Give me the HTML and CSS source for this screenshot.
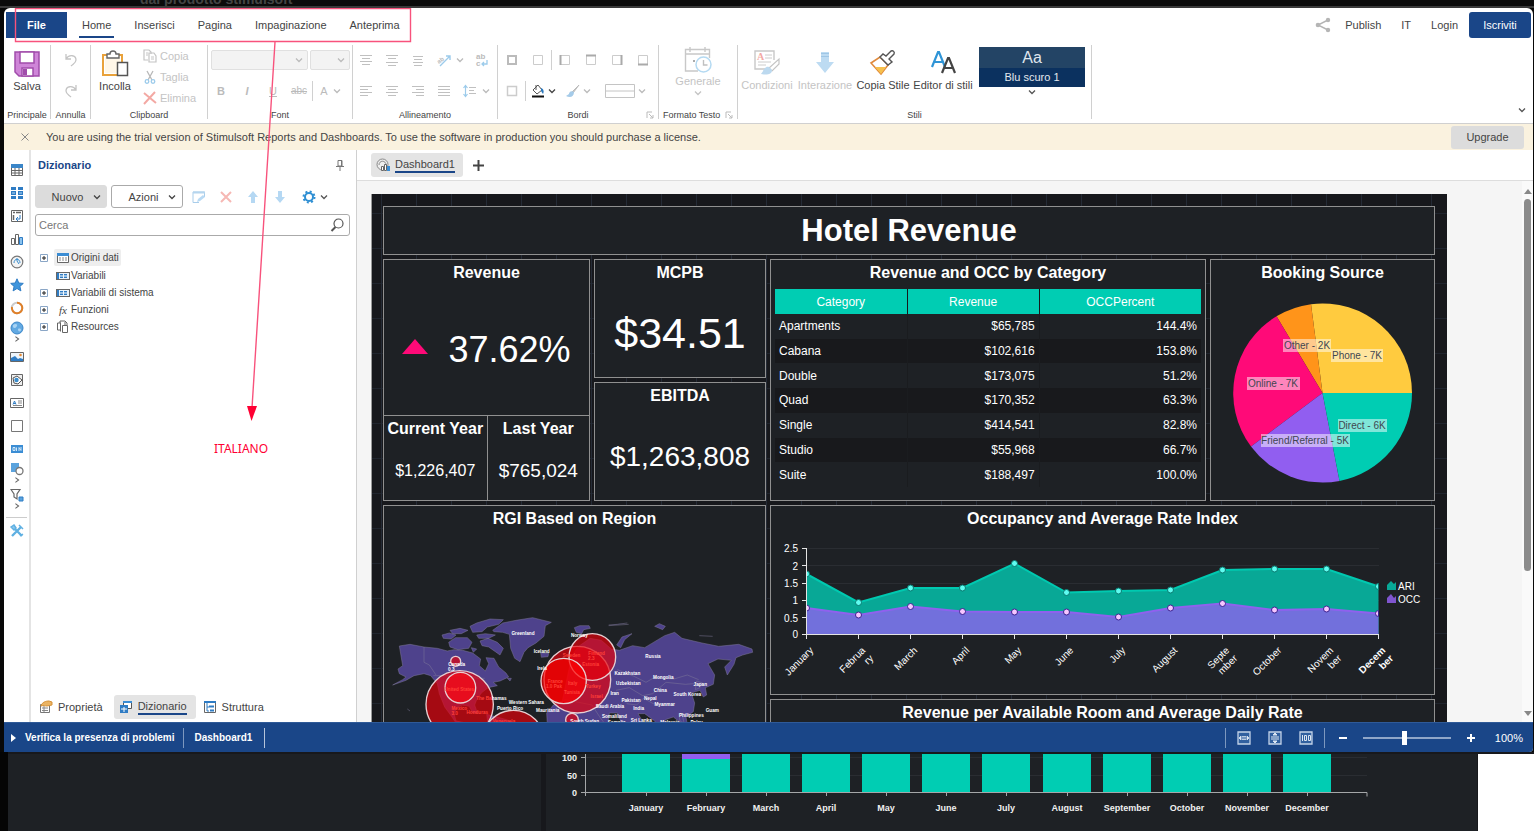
FILE: index.html
```html
<!DOCTYPE html>
<html lang="it">
<head>
<meta charset="utf-8">
<title>Dashboard1 - Designer</title>
<link rel="stylesheet" href="styles.css">
</head>
<body>
<svg class="defs" aria-hidden="true">
  <symbol id="chev" viewBox="0 0 10 10"><path d="M2 3.5 5 6.5 8 3.5" fill="none" stroke="currentColor" stroke-width="1.3"/></symbol>
  <symbol id="chevr" viewBox="0 0 10 10"><path d="M3 2 7 5 3 8" fill="none" stroke="currentColor" stroke-width="1.3"/></symbol>
  <symbol id="exp" viewBox="0 0 10 10"><path d="M1.5 1.5h7v7h-7z" fill="#fff" stroke="#8aa6c6"/><path d="M3 5h4M5 3v4" stroke="#222"/></symbol>
  <symbol id="launch" viewBox="0 0 8 8"><path d="M1 7V1h5M3 3l4 4M7 4v3H4" fill="none" stroke="#bbb"/></symbol>
  <symbol id="vars" viewBox="0 0 14 10"><rect x=".5" y="1.5" width="13" height="7" fill="#e8f2fb" stroke="#666"/><path d="M1 2h2v6H1z" fill="#2f7cc4"/><path d="M4 3h3v4H4zM8 3h3v4H8z" fill="#2f7cc4"/><path d="M4 5h7" stroke="#fff"/></symbol>
</svg>

<div class="behind-top"><span>dal prodotto stimulsoft</span></div>

<div class="window">
  <nav class="tabs">
    <button class="file">File</button>
    <a class="tab active" href="#">Home</a>
    <a class="tab" href="#">Inserisci</a>
    <a class="tab" href="#">Pagina</a>
    <a class="tab" href="#">Impaginazione</a>
    <a class="tab" href="#">Anteprima</a>
    <div class="account">
      <button class="plain" aria-label="Condividi"><svg width="16" height="16" viewBox="0 0 16 16"><path d="M13 3 3 8l10 5" fill="none" stroke="#b5b5b5" stroke-width="1.4"/><g fill="#b5b5b5"><circle cx="13" cy="3" r="2.2"/><circle cx="3" cy="8" r="2.3"/><circle cx="13" cy="13" r="2.2"/></g></svg></button>
      <a href="#">Publish</a><a class="lang" href="#">IT</a><a href="#">Login</a>
      <button class="signup">Iscriviti</button>
    </div>
  </nav>

  <div class="ribbon">
    <section class="group g-main">
      <div class="body center">
        <button class="big"><svg width="28" height="28" viewBox="0 0 28 28"><path d="M2 2h24v24H6l-4-4z" fill="#cf85d8" stroke="#a14cab" stroke-width="1.5"/><path d="M7 2h14v11H7z" fill="#fff" stroke="#a14cab" stroke-width="1.5"/><path d="M9 26v-8h11v8z" fill="#fff" stroke="#a14cab" stroke-width="1.5"/><path d="M10 19h4v6h-4z" fill="#a14cab"/></svg>Salva</button>
      </div><h3>Principale</h3>
    </section>
    <section class="group g-undo">
      <div class="body rows">
        <button class="tool" disabled aria-label="Annulla"><svg width="14" height="14" viewBox="0 0 14 14"><path d="M2 1v5h5M2 6C5 1 12 2 12 7c0 3-3 4-5 6" fill="none" stroke="#c4c4c4" stroke-width="1.3"/></svg></button>
        <button class="tool" disabled aria-label="Ripeti"><svg width="14" height="14" viewBox="0 0 14 14"><path d="M12 1v5H7M12 6C9 1 2 2 2 7c0 3 3 4 5 6" fill="none" stroke="#c4c4c4" stroke-width="1.3"/></svg></button>
      </div><h3>Annulla</h3>
    </section>
    <section class="group g-clip">
      <div class="body">
        <button class="big"><svg width="28" height="28" viewBox="0 0 28 28"><path d="M17 5h4v7M7 5H2v20h14" fill="none" stroke="#e9a23b" stroke-width="2"/><path d="M4 7h15v16H4z" fill="#fff7e8"/><path d="M6 8V4h3c0-4 6-4 6 0h3v4z" fill="#fff" stroke="#666" stroke-width="1.4"/><path d="M16.500 12.500h10v13h-10z" fill="#fff" stroke="#555" stroke-width="1.5"/></svg>Incolla</button>
        <div class="clip-list">
          <button disabled><svg width="14" height="14" viewBox="0 0 14 14"><path d="M5 11H1V1h5l2 2v2M6 4h5l2 3v6H6z" fill="none" stroke="#c4c4c4" stroke-width="1.2"/><path d="M3 4h2M3 6h2M8 8h3M8 10h3" stroke="#c4c4c4"/></svg>Copia</button>
          <button disabled><svg width="14" height="14" viewBox="0 0 14 14"><path d="M4 1l5 9M10 1 5 10" stroke="#b8b8b8" stroke-width="1.3"/><circle cx="4" cy="11.500" r="1.800" fill="none" stroke="#9ccbeb" stroke-width="1.300"/><circle cx="10" cy="11.500" r="1.800" fill="none" stroke="#9ccbeb" stroke-width="1.300"/></svg>Taglia</button>
          <button disabled><svg width="14" height="14" viewBox="0 0 14 14"><path d="M1 2l12 10M12 1 1 13" stroke="#f3a9a4" stroke-width="2"/></svg>Elimina</button>
        </div>
      </div><h3>Clipboard</h3>
    </section>
    <section class="group g-font">
      <div class="body rows">
        <div class="row selects">
          <span class="combo wide"><select disabled aria-label="Tipo di carattere"><option></option></select><svg width="10" height="10"><use href="#chev"/></svg></span>
          <span class="combo"><select disabled aria-label="Dimensione"><option></option></select><svg width="10" height="10"><use href="#chev"/></svg></span>
        </div>
        <div class="row">
          <button class="tool b" disabled>B</button><button class="tool i" disabled>I</button><button class="tool u" disabled>U</button><button class="tool s" disabled>abc</button><i class="vsep"></i><button class="tool a" disabled>A<svg width="10" height="10"><use href="#chev"/></svg></button>
        </div>
      </div><h3>Font</h3>
    </section>
    <section class="group g-align">
      <div class="body rows">
        <div class="row">
          <button class="tool" disabled aria-label="In alto"><svg width="12" height="12" viewBox="0 0 12 12"><path d="M0 1.500h12M2 4.500h8M0 7.500h12M2 10.500h8" stroke="#c0c0c0"/></svg></button>
          <button class="tool" disabled aria-label="Al centro"><svg width="12" height="12" viewBox="0 0 12 12"><path d="M0 1.500h12M2 4.500h8M0 8.500h12M2 11.500h8" stroke="#c0c0c0"/></svg></button>
          <button class="tool" disabled aria-label="In basso"><svg width="12" height="12" viewBox="0 0 12 12"><path d="M1 2.500h10M2 5.500h8M1 8.500h10M2 11.500h8" stroke="#c0c0c0"/></svg></button>
          <button class="tool" disabled aria-label="Orientamento"><svg width="14" height="14" viewBox="0 0 14 14"><path d="M3 13 13 3M9 3h4v4" fill="none" stroke="#9ccbeb" stroke-width="1.400"/><text x="0" y="9" class="tiny" transform="rotate(-35 4 7)">ab</text></svg></button><svg class="cv" width="10" height="10"><use href="#chev"/></svg>
          <button class="tool" disabled aria-label="A capo"><svg width="14" height="14" viewBox="0 0 14 14"><text x="1" y="6" class="tiny big-t">ab</text><text x="1" y="13" class="tiny big-t">c</text><path d="M12 7v4H7M9 9l-2 2 2 2" fill="none" stroke="#9ccbeb" stroke-width="1.300"/></svg></button>
        </div>
        <div class="row">
          <button class="tool" disabled aria-label="Sinistra"><svg width="12" height="12" viewBox="0 0 12 12"><path d="M0 1.500h12M0 4.500h8M0 7.500h12M0 10.500h8" stroke="#c0c0c0"/></svg></button>
          <button class="tool" disabled aria-label="Centro"><svg width="12" height="12" viewBox="0 0 12 12"><path d="M0 1.500h12M2 4.500h8M0 7.500h12M2 10.500h8" stroke="#c0c0c0"/></svg></button>
          <button class="tool" disabled aria-label="Destra"><svg width="12" height="12" viewBox="0 0 12 12"><path d="M0 1.500h12M4 4.500h8M0 7.500h12M4 10.500h8" stroke="#c0c0c0"/></svg></button>
          <button class="tool" disabled aria-label="Giustifica"><svg width="12" height="12" viewBox="0 0 12 12"><path d="M0 1.500h12M0 4.500h12M0 7.500h12M0 10.500h12" stroke="#c0c0c0"/></svg></button>
          <button class="tool" disabled aria-label="Interlinea"><svg width="14" height="14" viewBox="0 0 14 14"><path d="M2.500 2v10M.5 4l2-2.500L4.500 4M.5 10l2 2.500 2-2.500" fill="none" stroke="#9ccbeb" stroke-width="1.200"/><path d="M6 3.500h7M6 6.500h5M6 9.500h7" stroke="#c0c0c0"/></svg></button><svg class="cv" width="10" height="10"><use href="#chev"/></svg>
        </div>
      </div><h3>Allineamento</h3>
    </section>
    <section class="group g-border">
      <div class="body rows">
        <div class="row">
          <button class="tool" disabled aria-label="Tutti"><svg width="12" height="12"><path d="M2 2h8v8H2z" fill="none" stroke="#bbb" stroke-width="2"/></svg></button>
          <button class="tool" disabled aria-label="Nessuno"><svg width="12" height="12"><path d="M1.500 1.500h9v9h-9z" fill="none" stroke="#ccc"/></svg></button><i class="vsep"></i>
          <button class="tool" disabled aria-label="Bordo sinistro"><svg width="12" height="12"><path d="M1.500 1.500h9v9h-9z" fill="none" stroke="#ccc"/><path d="M1.500 1v10" stroke="#aaa" stroke-width="2"/></svg></button>
          <button class="tool" disabled aria-label="Bordo superiore"><svg width="12" height="12"><path d="M1.500 1.500h9v9h-9z" fill="none" stroke="#ccc"/><path d="M1 1.500h10" stroke="#aaa" stroke-width="2"/></svg></button>
          <button class="tool" disabled aria-label="Bordo destro"><svg width="12" height="12"><path d="M1.500 1.500h9v9h-9z" fill="none" stroke="#ccc"/><path d="M10.500 1v10" stroke="#aaa" stroke-width="2"/></svg></button>
          <button class="tool" disabled aria-label="Bordo inferiore"><svg width="12" height="12"><path d="M1.500 1.500h9v9h-9z" fill="none" stroke="#ccc"/><path d="M1 10.500h10" stroke="#aaa" stroke-width="2"/></svg></button>
        </div>
        <div class="row">
          <button class="tool" disabled aria-label="Ombra"><svg width="12" height="12"><path d="M1.500 1.500h9v9h-9z" fill="none" stroke="#ccc" stroke-width="1.500"/></svg></button><i class="vsep"></i>
          <button class="tool pair" aria-label="Sfondo"><svg width="14" height="14" viewBox="0 0 14 14"><path d="M2 6 7 1l4 5-5 4z" fill="#fff" stroke="#555"/><path d="M5 1v5" stroke="#555"/><path d="M10 4c3 1 3 4 2 6l-2-3z" fill="#2b78bd"/><path d="M1 12.500h12" stroke="#111" stroke-width="2"/></svg><svg width="10" height="10"><use href="#chev"/></svg></button>
          <button class="tool pair p2" disabled aria-label="Colore bordo"><svg width="15" height="14" viewBox="0 0 15 14"><path d="M14 1 7 8l1 1z" fill="#ccc" stroke="#bbb"/><path d="M9 8c-3-2-5 0-5 2l-3 2c4 2 8 1 8-4z" fill="#a5cbe9"/></svg><svg width="10" height="10"><use href="#chev"/></svg></button>
          <button class="tool pair p3" disabled aria-label="Stile bordo"><svg width="30" height="16"><path d="M.5 1.500h29v13H.5zM.5 8h29" fill="none" stroke="#c4c4c4"/></svg><svg width="10" height="10"><use href="#chev"/></svg></button>
        </div>
      </div><h3>Bordi<svg class="launch" width="8" height="8"><use href="#launch"/></svg></h3>
    </section>
    <section class="group g-format">
      <div class="body center">
        <button class="big" disabled><svg width="28" height="28" viewBox="0 0 28 28"><path d="M14 25H1.500V3.500h24V12" fill="none" stroke="#c8c8c8" stroke-width="1.400"/><path d="M1.500 8h24M6 1v5M21 1v5" stroke="#c8c8c8" stroke-width="1.400"/><path d="M10 14v2" stroke="#aaa" stroke-width="2"/><circle cx="19.500" cy="18.500" r="7.500" fill="#fff" stroke="#b5daf2" stroke-width="1.500"/><path d="M19.500 14v5h4" fill="none" stroke="#c0c0c0" stroke-width="1.400"/></svg>Generale<svg width="10" height="10"><use href="#chev"/></svg></button>
      </div><h3>Formato Testo<svg class="launch" width="8" height="8"><use href="#launch"/></svg></h3>
    </section>
    <section class="group g-style">
      <div class="body">
        <button class="big w1" disabled><svg width="28" height="28" viewBox="0 0 28 28"><path d="M14 20H2V2h19v9" fill="none" stroke="#c8c8c8" stroke-width="1.400"/><text x="4" y="11" class="a-red">A</text><path d="M12 6h7M12 9h7M5 13h13M5 16h8" stroke="#ccc"/><path d="M26 10v5l-7 7-3-3z" fill="#fff" stroke="#c4c4c4" stroke-width="1.200"/><path d="M16 18c-4-1-5 3-8 7 5 1 11 1 11-4z" fill="#bcd9ef"/></svg>Condizioni</button>
        <button class="big w1" disabled><svg width="28" height="28" viewBox="0 0 28 28"><path d="M10 3h8v10h5l-9 11-9-11h5z" fill="#bddbf2"/><path d="M10 4.500h8M10 7.500h8" stroke="#9fc6e5"/></svg>Interazione</button>
        <button class="big w1"><svg width="28" height="28" viewBox="0 0 28 28"><path d="M2 14 11 8l8 8-7 9z" fill="#fff" stroke="#e08a3c" stroke-width="1.600"/><path d="M6 18h11l-5 7z" fill="#f6c04c"/><path d="M11 8l3-3 3 2 5-5c2-1 4 1 3 3l-5 5 3 3-4 3z" fill="#fff" stroke="#555" stroke-width="1.400"/></svg>Copia Stile</button>
        <button class="big w1"><svg width="28" height="28" viewBox="0 0 28 28"><path d="M3 18 9 3h1l6 15M5 13h9" fill="none" stroke="#2f94d6" stroke-width="2.200"/><path d="M13 24 19 9h1l6 15M15 19h9" fill="none" stroke="#444" stroke-width="2.200"/></svg>Editor di stili</button>
        <div class="style-pick"><button class="swatch"><b>Aa</b><span>Blu scuro 1</span></button><svg width="10" height="10"><use href="#chev"/></svg></div>
      </div><h3>Stili</h3>
    </section>
    <button class="plain collapse" aria-label="Comprimi"><svg width="10" height="10"><use href="#chev"/></svg></button>
  </div>

  <div class="trial">
    <button class="plain close" aria-label="Chiudi"><svg width="10" height="10"><path d="M1.500 1.500l7 7M8.500 1.500l-7 7" stroke="#888"/></svg></button>
    <p>You are using the trial version of Stimulsoft Reports and Dashboards. To use the software in production you should purchase a license.</p>
    <button class="upgrade">Upgrade</button>
  </div>

  <main class="main">
    <aside class="toolbox">
      <button aria-label="Tabella"><svg width="14" height="14" viewBox="0 0 14 14"><path d="M1.500 1.500h11v11h-11z" fill="#fff" stroke="#666"/><path d="M1 1h12v4H1z" fill="#3b86c8"/><path d="M1 7.500h12M1 10h12M5 5v8M9 5v8" stroke="#666"/></svg></button>
      <button aria-label="Schede"><svg width="14" height="14" viewBox="0 0 14 14"><path d="M1 1h5v3H1zM8 1h5v3H8zM1 5h5v4H1zM8 5h5v4H8zM1 10h5v3H1zM8 10h5v3H8z" fill="#2f7cc4"/><path d="M2 7h3M9 7h3" stroke="#b5d8f4"/></svg></button>
      <button aria-label="Pivot"><svg width="14" height="14" viewBox="0 0 14 14"><path d="M1.500 1.500h11v11h-11z" fill="#fff" stroke="#666"/><path d="M3 3.500h2M6 3.500h5M3.500 6v5" stroke="#666" stroke-width="1.500"/><path d="M10 6v4H7M8 8l-2 2 2 2" fill="none" stroke="#2f7cc4"/></svg></button>
      <button aria-label="Grafico"><svg width="14" height="14" viewBox="0 0 14 14"><path d="M1.500 6.500h3v6h-3zM5.500 2.500h3v10h-3z" fill="#fff" stroke="#666"/><path d="M9.500 5.500h3v7h-3z" fill="#8cc3ee" stroke="#2f7cc4"/></svg></button>
      <button aria-label="Indicatore"><svg width="14" height="14" viewBox="0 0 14 14"><circle cx="7" cy="7" r="5.800" fill="#f4f4f4" stroke="#777" stroke-width="1.200"/><path d="M4 8c0-5 6-5 6 0M7 3v3l2 3" fill="none" stroke="#3b8dcc"/></svg></button>
      <button aria-label="KPI"><svg width="14" height="14" viewBox="0 0 14 14"><path d="M7 .8l1.800 4.200 4.500.4-3.400 3 1 4.500L7 10.500 3.100 12.900l1-4.500-3.400-3L5.200 5z" fill="#3f95dc" stroke="#2f7cc4"/></svg></button>
      <button aria-label="Avanzamento"><svg width="14" height="14" viewBox="0 0 14 14"><circle cx="7" cy="7" r="5.200" fill="none" stroke="#ccc" stroke-width="2"/><path d="M7 1.800A5.200 5.200 0 1 1 2 6" fill="none" stroke="#e07f27" stroke-width="2"/></svg></button>
      <button class="more" aria-label="Mappa"><svg width="14" height="14" viewBox="0 0 14 14"><circle cx="7" cy="7" r="6" fill="#62a9e2" stroke="#3b86c8"/><path d="M3 4c2-2 5-1 4 1S4 8 3 6zM8 8c2-1 3 0 3 1s-3 3-3-1z" fill="#a9d3f3"/></svg><svg width="8" height="8"><use href="#chevr"/></svg></button>
      <button aria-label="Immagine"><svg width="14" height="14" viewBox="0 0 14 14"><path d="M.5 2.500h13v9H.5z" fill="#eef5fb" stroke="#666"/><path d="M1 11V8l4-2 3 3 2-1 3 1v2z" fill="#2f7cc4"/><circle cx="10.500" cy="5" r="1.300" fill="#e88b34"/></svg></button>
      <button aria-label="Mappa regioni"><svg width="14" height="14" viewBox="0 0 14 14"><path d="M1.500 1.500h11v11h-11z" fill="#eee" stroke="#666"/><path d="M3 5l4-2 5 4-4 4-4-1z" fill="#fff" stroke="#555"/><circle cx="6.500" cy="7" r="2.200" fill="#3b8dcc"/></svg></button>
      <button aria-label="Testo"><svg width="14" height="14" viewBox="0 0 14 14"><path d="M.5 2.500h13v9H.5z" fill="#fff" stroke="#666"/><path d="M3 8.500 4.500 5 6 8.500M3.500 7.500h2" fill="none" stroke="#2f7cc4"/><path d="M8 5h4M8 7h4M3 9.500h9" stroke="#888"/></svg></button>
      <button aria-label="Pannello"><svg width="14" height="14" viewBox="0 0 14 14"><path d="M1.500 1.500h11v11h-11z" fill="#fff" stroke="#777"/></svg></button>
      <button aria-label="Pulsante"><svg width="14" height="14" viewBox="0 0 14 14"><path d="M1 3h12v8H1z" fill="#3b8dd4"/><path d="M3 5.500h2v3H3zM6.500 9V5.500M9 9V5.500l2 3V5" fill="none" stroke="#d3e8f8"/></svg></button>
      <button class="more" aria-label="Forma"><svg width="14" height="14" viewBox="0 0 14 14"><path d="M1 1h8v9H1z" fill="#5ba3dd"/><circle cx="9.500" cy="9" r="3.500" fill="#fff" stroke="#777" stroke-width="1.300"/></svg><svg width="8" height="8"><use href="#chevr"/></svg></button>
      <button class="more" aria-label="Filtro"><svg width="14" height="14" viewBox="0 0 14 14"><path d="M1 1.500h9L7 6v5l-3-2V6z" fill="#fff" stroke="#666" stroke-width="1.200"/><path d="M9 9h4v4H9z" fill="#5ba3dd" stroke="#2f7cc4"/></svg><svg width="8" height="8"><use href="#chevr"/></svg></button>
      <hr>
      <button aria-label="Impostazioni"><svg width="14" height="14" viewBox="0 0 14 14"><path d="M2 12 11 3M3 3l9 9" stroke="#5fb0e2" stroke-width="2.400"/><path d="M1 3l3-2 2 3-2 2zM9 1l4 4M10 12l3-2" stroke="#5fb0e2" stroke-width="1.500" fill="#8cc8ee"/></svg></button>
    </aside>

    <section class="dict">
      <header><h2>Dizionario</h2><button class="plain" aria-label="Blocca"><svg width="8" height="11" viewBox="0 0 8 11"><path d="M2 .5h4v5.500H2zM0 6.500h8M4 7v4M5.500 1v5" fill="none" stroke="#777"/></svg></button></header>
      <div class="actions">
        <button class="drop new">Nuovo<svg width="10" height="10"><use href="#chev"/></svg></button>
        <button class="drop">Azioni<svg width="10" height="10"><use href="#chev"/></svg></button>
        <button class="ic" disabled aria-label="Modifica"><svg width="14" height="14" viewBox="0 0 14 14"><path d="M7 12.500H1V2h11.500v5" fill="none" stroke="#a9cdea"/><path d="M1 1.500h12v2H1z" fill="#b5d5ee"/><path d="M5 12l1-3 5-4 2 2-5 4z" fill="#b9daf4"/></svg></button>
        <button class="ic" disabled aria-label="Elimina"><svg width="14" height="14" viewBox="0 0 14 14"><path d="M2 2l10 10M12 2 2 12" stroke="#f6b8b4" stroke-width="2"/></svg></button>
        <button class="ic" disabled aria-label="Su"><svg width="14" height="14" viewBox="0 0 14 14"><path d="M5 13V7H2l5-6 5 6H9v6z" fill="#b5d8f3"/></svg></button>
        <button class="ic" disabled aria-label="Giù"><svg width="14" height="14" viewBox="0 0 14 14"><path d="M5 1v6H2l5 6 5-6H9V1z" fill="#b5d8f3"/></svg></button>
        <button class="ic gear" aria-label="Impostazioni"><svg width="14" height="14" viewBox="0 0 14 14"><circle cx="7" cy="7" r="4" fill="none" stroke="#2f8fd3" stroke-width="2"/><circle cx="7" cy="7" r="5.500" fill="none" stroke="#2f8fd3" stroke-width="2" stroke-dasharray="2 2.320"/></svg><svg width="10" height="10"><use href="#chev"/></svg></button>
      </div>
      <label class="search"><input type="text" placeholder="Cerca" aria-label="Cerca"><svg width="14" height="14" viewBox="0 0 14 14"><circle cx="8.500" cy="5.500" r="4.500" fill="none" stroke="#555" stroke-width="1.200"/><path d="M5.500 9 1.500 13" stroke="#555" stroke-width="2"/></svg></label>
      <ul class="tree">
        <li><svg width="10" height="10"><use href="#exp"/></svg><span class="sel"><svg width="14" height="12" viewBox="0 0 14 12"><path d="M1.500 1.500h11v9h-11z" fill="#fff" stroke="#666"/><path d="M1 1h12v3H1z" fill="#3b8dd4"/><path d="M3 6h8M3 8h8" stroke="#888" stroke-dasharray="2 1"/></svg>Origini dati</span></li>
        <li class="leaf"><span><svg width="14" height="10"><use href="#vars"/></svg>Variabili</span></li>
        <li><svg width="10" height="10"><use href="#exp"/></svg><span><svg width="14" height="10"><use href="#vars"/></svg>Variabili di sistema</span></li>
        <li><svg width="10" height="10"><use href="#exp"/></svg><span><em>fx</em>Funzioni</span></li>
        <li><svg width="10" height="10"><use href="#exp"/></svg><span><svg width="14" height="13" viewBox="0 0 14 13"><path d="M4 10H1.500V3H4V1h5l2 2v2M4.500 2.500v9M6.500 5.500h5v7h-5zM9 2v3" fill="none" stroke="#666"/></svg>Resources</span></li>
      </ul>
      <nav class="panel-tabs">
        <a href="#"><svg width="14" height="14" viewBox="0 0 14 14"><path d="M1.500 4.500h9v8h-9z" fill="#fff" stroke="#777"/><path d="M3 8h6M3 10.500h6M5 6v6" stroke="#888"/><path d="M2 6c1-4 5-5 8-5l3 1v3c-2 0-3 1-5 1s-3-1-6 0z" fill="#eab464" stroke="#d69136"/></svg>Proprietà</a>
        <a class="on" href="#"><svg width="14" height="14" viewBox="0 0 14 14"><path d="M4.500 1.500h8v7h-8z" fill="#fff" stroke="#555"/><path d="M4 1h9v2H4z" fill="#3b8dd4"/><path d="M1 5h8v8H1z" fill="#2f7cc4"/><path d="M2 9h6M5 7v5" stroke="#fff"/></svg><span>Dizionario</span></a>
        <a href="#"><svg width="14" height="14" viewBox="0 0 14 14"><path d="M1.500 1.500h11v11h-11z" fill="#fff" stroke="#666"/><path d="M1 1h12v2H1z" fill="#2f7cc4"/><path d="M4 3v8h2M4 7h2" fill="none" stroke="#2f7cc4"/><path d="M6 6.500h5M7 10.500h4" stroke="#2f7cc4" stroke-width="2"/></svg>Struttura</a>
      </nav>
    </section>

    <section class="editor">
      <nav class="doc-tabs"><a href="#"><svg width="15" height="14" viewBox="0 0 15 14"><circle cx="6.500" cy="6.500" r="5.500" fill="#eee" stroke="#888"/><path d="M3 7c0-5 7-5 7 0" fill="none" stroke="#888"/><path d="M5.500 8.500h2v4h-2zM8.500 6.500h2v6h-2z" fill="#fff" stroke="#666"/><path d="M11 8h3v5h-3z" fill="#3b8dd4"/></svg><span>Dashboard1</span></a><button class="plain" aria-label="Aggiungi"><svg width="11" height="11"><path d="M0 5.500h11M5.500 0v11" stroke="#444" stroke-width="2"/></svg></button></nav>
      <div class="stage">
        <div class="view">
          <div class="dash">
            <h1 class="card">Hotel Revenue</h1>
            <div class="card c-rev">
              <div class="rev"><h2>Revenue</h2><p><svg width="26" height="15"><path d="M13 0 26 15H0z" fill="#ff0a78"/></svg>37.62%</p></div>
              <div class="years"><div><h2>Current Year</h2><p class="n16">$1,226,407</p></div><div><h2>Last Year</h2><p class="n19">$765,024</p></div></div>
            </div>
            <div class="kpis">
              <div class="card"><h2>MCPB</h2><p class="n43">$34.51</p></div>
              <div class="card"><h2>EBITDA</h2><p class="n28">$1,263,808</p></div>
            </div>
            <div class="card c-table"><h2>Revenue and OCC by Category</h2>
              <table>
                <colgroup><col class="k1"><col class="k2"><col></colgroup>
                <thead><tr><th>Category</th><th>Revenue</th><th>OCCPercent</th></tr></thead>
                <tbody>
                <tr><td>Apartments</td><td>$65,785</td><td>144.4%</td></tr>
                <tr><td>Cabana</td><td>$102,616</td><td>153.8%</td></tr>
                <tr><td>Double</td><td>$173,075</td><td>51.2%</td></tr>
                <tr><td>Quad</td><td>$170,352</td><td>63.3%</td></tr>
                <tr><td>Single</td><td>$414,541</td><td>82.8%</td></tr>
                <tr><td>Studio</td><td>$55,968</td><td>66.7%</td></tr>
                <tr><td>Suite</td><td>$188,497</td><td>100.0%</td></tr>
                </tbody>
              </table>
            </div>
            <div class="card c-pie"><h2>Booking Source</h2>
              <svg class="fill" viewBox="1211 285 223 215">
                <path d="M1322.500 393H1412A89.500 89.500 0 0 0 1311 304.200z" fill="#ffcb3f"/>
                <path d="M1322.500 393 1311 304.200A89.500 89.500 0 0 0 1276.500 316.300z" fill="#ff941a"/>
                <path d="M1322.500 393 1276.500 316.300A89.500 89.500 0 0 0 1251 446.500z" fill="#ff0a78"/>
                <path d="M1322.500 393 1251 446.500A89.500 89.500 0 0 0 1339.500 480.900z" fill="#915ef0"/>
                <path d="M1322.500 393 1339.500 480.900A89.500 89.500 0 0 0 1412 393z" fill="#00cdb3"/>
                <g fill="#fff" fill-opacity=".5"><path d="M1283 339h48v13h-48zM1331 349h52v13h-52zM1247 377h53v13h-53zM1338 419h49v13h-49zM1261 434h89v13h-89z"/></g>
                <g class="pie-t"><text x="1307" y="349">Other - 2K</text><text x="1357" y="359">Phone - 7K</text><text x="1273" y="387">Online - 7K</text><text x="1362" y="429">Direct - 6K</text><text x="1305" y="444">Friend/Referral - 5K</text></g>
              </svg>
            </div>
            <div class="card c-map"><h2>RGI Based on Region</h2>
              <svg class="fill" viewBox="42 90 1143 620">
                <g fill="#4e428c" stroke="#7f7a99" stroke-width="1.500">
                  <path d="M88 435l32-5 42 8 40 4 30 8 20-4 26 2 30 8 24 18-4 20 18 16 10-22-8-18 24 2 14 26 22 18 8 12-26 12-20 4 12 10-28 6-20 16-14 20-6 16 8 24-14 0-10-20-22-4-16 8-8 18 6 22 20 4 14 12 12 30 20 16-30-16-28-28-20-30-22-30-16-40-6-30-20-24-20-6-30 6-24 14-40 14 30-16 10-8-20-10-4-14 14-10z"/>
                  <path d="M162 438v46l16 8 20 30M190 524h110l20 8 24 0" fill="none"/>
                  <path d="M216 402l22-6 20 6-14 12-24-2zM236 424l20-14 36 0 14 14-10 18-32 4-24-8zM240 388l30-6 24 6-20 10-26 0zM300 376l20-10 40-12 40 2-14 14-34 8-16 14-28 2zM320 402l26-4 30 4-20 10-30 0zM330 420l24-8 28 12 18 18-10 20-14-10-20-14-20-4zM304 440l16 4-10 10zM412 532l12 0-4 8z"/>
                  <path d="M368 388l30-22 40-8 50-8 56 14-18 10-4 32-24 20-24 14-12 14-12 28-16-10-12-30-4-42-20-6-26-2z"/>
                  <path d="M512 455l24 2-2 10-20 2zM613 380l16-6 28 0 4 8-20 4-6 12-16-4zM716 372l26-2 30-4M740 432l16-24 30-10-22 18-12 24zM854 376l14-8 18 8-8 10zM988 404l40 2"/>
                  <path d="M606 462l20-26 34-24 34 6 30 26 24 4 40-14 36 6 20-12 40-24 30-10 22 18 60 14 50 10 60-6 40 14 2 10-30 8-20 8-6 20-20 32-8-24 20-20-40-4-30 14 20 34-4 28-24 10 4 22-10 6-10-20-26 8 10 30-4 26-22 16 6 34-14 4-12-24-18-14-24 8-10 40-22-36-30-22-20 0 12 20-10 24-34 14-24-44-6-16-24 0-4 36 10 16-62-12-50-8 4-26-24-26-16-12z"/>
                  <path d="M530 636l20-24 36-16 40 8 40 8 22 34 22 30v60H548l-14-30z"/>
                  <path d="M738 568l40-8 40 24 30-6 40-34 58 6 50-4M742 506l50 20 36 18 24-14 60 4 40-12 34 14M770 608l30 4 20-20 30 16 30 4" fill="none"/>
                  <path d="M980 540l18 6-8 14-14 6zM926 638l12 8 4 20-12-6zM350 640l60 16 60 24v30H360z"/>
                  <path d="M112 624l8 6M716 374l60-4" fill="none"/>
                </g>
                <g fill="#e6000b" fill-opacity=".68" stroke="#e8cfd2" stroke-width="4">
                  <circle cx="269" cy="610" r="101"/><circle cx="271" cy="560" r="46" fill="#ff0a14"/><circle cx="257" cy="481" r="15"/>
                  <circle cx="430" cy="720" r="92"/><circle cx="622" cy="536" r="100"/><circle cx="667" cy="468" r="70"/><circle cx="581" cy="540" r="68" fill="#ff0000"/><circle cx="606" cy="656" r="19"/>
                </g>
                <g class="map-r"><text x="268" y="569">United States</text><text x="268" y="627">Mexico</text><text x="254" y="642">3.0</text><text x="322" y="639">Honduras</text><text x="402" y="667">Venezuela</text><text x="605" y="468">Sweden</text><text x="680" y="462">Finland</text><text x="664" y="477">2.3</text><text x="662" y="494">Estonia</text><text x="556" y="546">France</text><text x="552" y="562">1.0 Pak</text><text x="608" y="552">Italy</text><text x="606" y="578">Tunisia</text><text x="670" y="562">Turkey</text><text x="680" y="590">Israel</text></g>
                <g class="map-t"><text x="459" y="403">Greenland</text><text x="515" y="456">Iceland</text><text x="628" y="408">Norway</text><text x="849" y="470">Russia</text><text x="260" y="494">Canada</text><text x="244" y="510">0.3</text><text x="516" y="508">Irela</text><text x="772" y="522">Kazakhstan</text><text x="880" y="534">Mongolia</text><text x="775" y="552">Uzbekistan</text><text x="991" y="556">Japan</text><text x="871" y="574">China</text><text x="952" y="584">South Korea</text><text x="734" y="582">Iran</text><text x="783" y="602">Pakistan</text><text x="841" y="597">Nepal</text><text x="884" y="616">Myanmar</text><text x="720" y="620">Saudi Arabia</text><text x="806" y="626">India</text><text x="1027" y="632">Guam</text><text x="964" y="647">Philippines</text><text x="733" y="650">Somaliland</text><text x="814" y="662">Sri Lanka</text><text x="644" y="667">South Sudan</text><text x="740" y="668">Somalia</text><text x="900" y="668">Malaysia</text><text x="980" y="670">Palau</text><text x="364" y="597"><tspan fill="#ff4038">The Ba</tspan>hamas</text><text x="469" y="609">Western Sahara</text><text x="420" y="627">Puerto Rico</text><text x="533" y="633">Mauritania</text></g>
              </svg>
            </div>
            <div class="right-col">
              <div class="card c-occ"><h2>Occupancy and Average Rate Index</h2>
                <svg class="fill" viewBox="771 531 663 163">
                  <path d="M806 548.500h573M806 565.500h573M806 583.500h573M806 600.500h573M806 617.500h573" stroke="#2a2d32"/>
                  <path d="M806.500 574 858.500 602.500 910.500 588 962.500 588 1014.500 563.500 1066.500 592.500 1118.500 591 1170.500 590 1222.500 570 1274.500 569 1326.500 569 1378.500 586.500V635H806.500z" fill="#08a896"/>
                  <path d="M806.500 608 858.500 615 910.500 606.500 962.500 611.500 1014.500 612 1066.500 612 1118.500 617 1170.500 608 1222.500 603.500 1274.500 610 1326.500 609 1378.500 613.500V635H806.500z" fill="#7270dc"/>
                  <path d="M806.500 574 858.500 602.500 910.500 588 962.500 588 1014.500 563.500 1066.500 592.500 1118.500 591 1170.500 590 1222.500 570 1274.500 569 1326.500 569 1378.500 586.500" fill="none" stroke="#00c9b0" stroke-width="2"/>
                  <path d="M806.500 608 858.500 615 910.500 606.500 962.500 611.500 1014.500 612 1066.500 612 1118.500 617 1170.500 608 1222.500 603.500 1274.500 610 1326.500 609 1378.500 613.500" fill="none" stroke="#8f61ee" stroke-width="2"/>
                  <g fill="#5ffcf0" stroke="#087a70"><path d="M806.500 571a3 3 0 0 1 0 6zM1378.500 583.500a3 3 0 0 0 0 6z"/><circle cx="858.500" cy="602.500" r="3"/><circle cx="910.500" cy="588" r="3"/><circle cx="962.500" cy="588" r="3"/><circle cx="1014.500" cy="563.500" r="3"/><circle cx="1066.500" cy="592.500" r="3"/><circle cx="1118.500" cy="591" r="3"/><circle cx="1170.500" cy="590" r="3"/><circle cx="1222.500" cy="570" r="3"/><circle cx="1274.500" cy="569" r="3"/><circle cx="1326.500" cy="569" r="3"/></g>
                  <g fill="#f6c6ff" stroke="#3b2190"><path d="M806.500 605a3 3 0 0 1 0 6zM1378.500 610.500a3 3 0 0 0 0 6z"/><circle cx="858.500" cy="615" r="3"/><circle cx="910.500" cy="606.500" r="3"/><circle cx="962.500" cy="611.500" r="3"/><circle cx="1014.500" cy="612" r="3"/><circle cx="1066.500" cy="612" r="3"/><circle cx="1118.500" cy="617" r="3"/><circle cx="1170.500" cy="608" r="3"/><circle cx="1222.500" cy="603.500" r="3"/><circle cx="1274.500" cy="610" r="3"/><circle cx="1326.500" cy="609" r="3"/></g>
                  <path d="M806.500 548v87M802 548.500h4M802 565.500h4M802 583.500h4M802 600.500h4M802 617.500h4M802 634.500h577M806.500 635v4M858.500 635v4M910.500 635v4M962.500 635v4M1014.500 635v4M1066.500 635v4M1118.500 635v4M1170.500 635v4M1222.500 635v4M1274.500 635v4M1326.500 635v4M1378.500 635v4" stroke="#e4e4e4" fill="none"/>
                  <g class="ax end"><text x="798" y="552">2.5</text><text x="798" y="570">2</text><text x="798" y="587">1.5</text><text x="798" y="604">1</text><text x="798" y="622">0.5</text><text x="798" y="638">0</text></g>
                  <g class="ax end">
                    <text transform="translate(814 651) rotate(-45)">January</text>
                    <text transform="translate(866 651) rotate(-45)">Februa</text><text transform="translate(874 659) rotate(-45)">ry</text>
                    <text transform="translate(918 651) rotate(-45)">March</text><text transform="translate(970 651) rotate(-45)">April</text><text transform="translate(1022 651) rotate(-45)">May</text><text transform="translate(1074 651) rotate(-45)">June</text><text transform="translate(1126 651) rotate(-45)">July</text><text transform="translate(1178 651) rotate(-45)">August</text>
                    <text transform="translate(1230 651) rotate(-45)">Septe</text><text transform="translate(1238 659) rotate(-45)">mber</text>
                    <text transform="translate(1282 651) rotate(-45)">October</text>
                    <text transform="translate(1334 651) rotate(-45)">Novem</text><text transform="translate(1342 659) rotate(-45)">ber</text>
                    <text class="bold" transform="translate(1386 651) rotate(-45)">Decem</text><text class="bold" transform="translate(1394 659) rotate(-45)">ber</text>
                  </g>
                  <path d="M1387 590v-5l4-4 3 3 2-2v8z" fill="#08a896"/><path d="M1387 603v-5l4-4 3 4 2-2v7z" fill="#7f55cf"/>
                  <g class="ax"><text x="1398" y="590">ARI</text><text x="1398" y="603">OCC</text></g>
                </svg>
              </div>
              <div class="card c-next"><h2>Revenue per Available Room and Average Daily Rate</h2></div>
            </div>
          </div>
        </div>
        <div class="vscroll"><i class="up"></i><i class="thumb"></i><i class="down"></i></div>
      </div>
    </section>
  </main>

  <footer class="status">
    <button class="check"><svg width="5" height="8"><path d="M0 0l5 4-5 4z" fill="#fff"/></svg>Verifica la presenza di problemi</button>
    <span class="doc">Dashboard1</span>
    <div class="zoom">
      <button aria-label="Larghezza pagina"><svg width="14" height="14"><path d="M1 1h12v12H1z" fill="#31609f" stroke="#c3d3e8" stroke-width="1.300"/><path d="M2 7l2-2v4zM12 7l-2-2v4zM5 5.500h4M5 7h4M5 8.500h4" fill="#dce6f2" stroke="#dce6f2" stroke-width=".8"/></svg></button>
      <button aria-label="Pagina intera"><svg width="14" height="14"><path d="M1 1h12v12H1z" fill="#31609f" stroke="#c3d3e8" stroke-width="1.300"/><path d="M7 2l2 2H5zM7 12l2-2H5zM3 6h8M3 8h8" fill="#dce6f2" stroke="#dce6f2"/></svg></button>
      <button aria-label="100%"><svg width="14" height="14"><path d="M1 1h12v12H1z" fill="#31609f" stroke="#c3d3e8" stroke-width="1.300"/><path d="M3.500 4v6M5.500 4.500h2v5h-2zM9.500 4.500h2v5h-2z" fill="none" stroke="#dce6f2"/></svg></button>
    </div>
    <div class="slider">
      <button aria-label="Riduci"><svg width="8" height="8"><path d="M0 4h8" stroke="#fff" stroke-width="2"/></svg></button>
      <input type="range" min="0" max="100" value="47" aria-label="Zoom">
      <button aria-label="Ingrandisci"><svg width="8" height="8"><path d="M0 4h8M4 0v8" stroke="#fff" stroke-width="2"/></svg></button>
      <span>100%</span>
    </div>
  </footer>

  <svg class="note" viewBox="0 0 430 460" aria-hidden="true">
    <path d="M15.500 8.500h395v33h-395zM275 42 252 408" fill="none" stroke="#f8527c" stroke-width="1.400"/>
    <path d="M247 406h10l-5.500 15z" fill="#ff0033"/>
    <text x="214" y="453">ITALIANO</text>
  </svg>
</div>

<div class="behind">
  <div class="pane"></div>
  <div class="pane chart">
    <svg viewBox="546 754 931 77">
      <path d="M586 775.500h781M586 757.500h781" stroke="#2a2d32"/>
      <path d="M622 754h48v38h-48zM682 759h48v33h-48zM742 754h48v38h-48zM802 754h48v38h-48zM862 754h48v38h-48zM922 754h48v38h-48zM982 754h48v38h-48zM1043 754h48v38h-48zM1103 754h48v38h-48zM1163 754h48v38h-48zM1223 754h48v38h-48zM1283 754h48v38h-48z" fill="#00cdb3"/>
      <path d="M682 754h48v5h-48z" fill="#915ef0"/>
      <path d="M585.500 754v42M581 757.500h4M581 775.500h4M581 792.500h786v4M646.500 792v4M706.500 792v4M766.500 792v4M826.500 792v4M886.500 792v4M946.500 792v4M1006.500 792v4M1067.500 792v4M1127.500 792v4M1187.500 792v4M1247.500 792v4M1307.500 792v4" fill="none" stroke="#a5a7a9"/>
      <g class="bx end"><text x="577" y="761">100</text><text x="577" y="779">50</text><text x="577" y="796">0</text></g>
      <g class="bx mid"><text x="646" y="811">January</text><text x="706" y="811">February</text><text x="766" y="811">March</text><text x="826" y="811">April</text><text x="886" y="811">May</text><text x="946" y="811">June</text><text x="1006" y="811">July</text><text x="1067" y="811">August</text><text x="1127" y="811">September</text><text x="1187" y="811">October</text><text x="1247" y="811">November</text><text x="1307" y="811">December</text></g>
    </svg>
  </div>
</div>
</body>
</html>
```
FILE: styles.css
```css
* { box-sizing: border-box; }
body, h1, h2, h3, p, ul { margin: 0; padding: 0; }
body {
  display: flex; flex-direction: column; height: 100vh; overflow: hidden;
  background: #080808; color: #444;
  font: 11px/14px "Liberation Sans", Arial, sans-serif;
}
button, input, select { font: inherit; color: inherit; }
button { border: 0; background: none; padding: 0; display: flex; align-items: center; justify-content: center; white-space: nowrap; }
a { color: inherit; text-decoration: none; }
svg { display: block; flex: none; }
.defs { position: absolute; width: 0; height: 0; }

.behind-top { height: 8px; flex: none; display: flex; align-items: flex-end; overflow: hidden; background: #0b0b0b; border-bottom: 2px solid #3a3a3a; }
.behind-top span { padding-left: 140px; font: bold 14px/14px "Liberation Sans", Arial, sans-serif; color: #444; }

.window { position: relative; flex: 1; min-height: 0; margin: 0 1px 0 4px; display: flex; flex-direction: column; background: #fff; border-radius: 6px 6px 4px 0; overflow: hidden; }

.tabs { flex: none; height: 35px; display: flex; align-items: center; gap: 17px; padding: 0 2px 1px; }
.file { width: 61px; height: 26px; background: #1a4688; color: #fff; font-weight: bold; margin-right: -5px; }
.tab { height: 26px; line-height: 26px; padding: 0 3px; border-bottom: 2px solid transparent; }
.tab.active { border-color: #1a4688; }
.account { margin-left: auto; display: flex; align-items: center; gap: 20px; }
.account .plain { margin-right: -6px; }
.signup { width: 62px; height: 26px; margin-left: -9px; background: #1a4688; color: #fff; border-radius: 3px; }

.ribbon { flex: none; height: 81px; display: flex; border-bottom: 1px solid #d0d0d0; }
.group { margin: 2px 0 4px; border-right: 1px solid #d0d0d0; display: flex; flex-direction: column; flex: none; }
.body { height: 62px; display: flex; flex: none; }
.body.center { justify-content: center; }
.body.rows { display: grid; grid-template-rows: 30px 32px; }
.row { display: flex; align-items: center; }
.group h3 { position: relative; font: 9px/16px "Liberation Sans", Arial, sans-serif; text-align: center; white-space: nowrap; }
.launch { position: absolute; right: 4px; top: 4px; }
.g-main { width: 47px; } .g-undo { width: 40px; } .g-clip { width: 117px; } .g-font { width: 145px; }
.g-align { width: 145px; } .g-border { width: 161px; } .g-format { width: 79px; } .g-format h3 { text-align: left; padding-left: 4px; } .g-style { width: 354px; }
.tool { width: 26px; height: 26px; color: #bbb; }
.g-undo .tool { margin: auto; }
.big { flex-direction: column; justify-content: flex-start; gap: 1px; padding-top: 5px; color: #444; }
.big:disabled, .clip-list button { color: #c4c4c4; }
.g-clip .big { width: 48px; }
.g-format .big { padding-top: 1px; gap: 0; }
.clip-list { display: grid; grid-template-rows: repeat(3, 21px); justify-items: start; padding-left: 4px; }
.clip-list button { gap: 3px; }
.selects { gap: 2px; padding-left: 3px; }
.combo { position: relative; width: 40px; height: 20px; color: #bbb; }
.combo.wide { width: 97px; }
.combo select { appearance: none; width: 100%; height: 100%; border: 1px solid #e0e0e0; border-radius: 2px; background: #f3f3f3; opacity: 1; }
.combo svg { position: absolute; right: 4px; top: 5px; }
.b { font-weight: bold; } .i { font-style: italic; font-weight: bold; } .u { text-decoration: underline; } .s { text-decoration: line-through; font-size: 10px; }
.a { gap: 4px; width: 36px; }
.vsep { width: 1px; height: 20px; background: #d0d0d0; }
.cv { color: #bbb; margin: 0 4px 0 -2px; }
.row .cv:last-child { margin-right: 0; }
.g-border .row { padding-left: 1px; }
.pair { gap: 2px; width: 35px; } .pair:enabled { color: #444; } .pair.p3 { width: 52px; margin-left: 4px; gap: 2px; }
.tiny { font: bold 6px "Liberation Sans", Arial, sans-serif; fill: #bbb; }
.big-t { font-size: 8px; }
.a-red { font: bold 10px "Liberation Serif", serif; fill: #f3a9a4; }
.w1 { width: 58px; padding-top: 4px; } .w1:nth-child(4) { width: 62px; }
.style-pick { margin-left: 5px; display: flex; flex-direction: column; align-items: center; padding-top: 2px; color: #555; }
.swatch { width: 106px; height: 40px; flex-direction: column; align-items: stretch; color: #fff; background: #0b315f; }
.swatch b { font-weight: normal; font-size: 16px; line-height: 21px; background: #234465; color: #dfe6ee; }
.swatch span { line-height: 19px; color: #e4e8ee; }
.collapse { margin: auto 6px 8px auto; color: #555; }

.trial { flex: none; height: 26px; display: flex; align-items: center; background: #faf2df; padding-right: 9px; }
.trial .close { width: 42px; }
.upgrade { margin-left: auto; width: 73px; height: 23px; border-radius: 3px; background: #dcdcdc; }

.main { flex: 1; min-height: 0; display: flex; }
.toolbox { width: 27px; padding-top: 8px; border-right: 2px solid #e4e4e4; flex: none; }
.toolbox button { width: 25px; height: 23px; }
.toolbox .more { height: 26px; flex-direction: column; justify-content: flex-start; padding-top: 2px; color: #666; }
.toolbox hr { border: 0; border-top: 1px solid #ccc; margin: 5px 2px 1px; }

.dict { width: 326px; flex: none; display: flex; flex-direction: column; border-right: 1px solid #d0d0d0; }
.dict header { height: 30px; display: flex; align-items: center; justify-content: space-between; padding: 0 12px 0 7px; }
.dict h2 { font-size: 11px; color: #1a4688; }
.actions { display: flex; align-items: center; padding: 5px 0 0 4px; }
.drop { width: 72px; height: 23px; border: 1px solid #aaa; border-radius: 3px; gap: 9px; padding-left: 12px; margin-right: 4px; }
.drop.new { background: #dcdcdc; border-color: #dcdcdc; }
.drop + .ic { margin-left: -2px; }
.ic { width: 27px; height: 22px; }
.ic.gear { width: 36px; gap: 3px; margin-left: 4px; color: #555; }
.search { display: flex; align-items: center; margin: 6px 6px 0 4px; height: 22px; border: 1px solid #aaa; border-radius: 3px; padding: 0 5px 0 3px; }
.search input { flex: 1; border: 0; outline: 0; background: none; padding: 0; }
.search input::placeholder { color: #777; }
.tree { list-style: none; padding: 12px 0 0 8px; }
.tree li { display: flex; align-items: center; gap: 5px; height: 17px; }
.tree li:first-child { height: 19px; }
.tree .leaf { padding-left: 15px; }
.tree span { display: flex; align-items: center; gap: 1px; padding: 0 2px; height: 17px; font-size: 10px; }
.tree .sel { background: #eee; border-radius: 2px; }
.tree em { width: 14px; text-align: center; font: italic 11px "Liberation Serif", serif; }
.panel-tabs { margin-top: auto; padding: 0 0 3px 1px; display: flex; }
.panel-tabs a { display: flex; align-items: center; gap: 5px; height: 24px; padding: 0 7px; border-radius: 3px; }
.panel-tabs a:first-child { padding-right: 11px; }
.panel-tabs .on, .doc-tabs a { background: #e4e4e4; }
.panel-tabs .on { padding: 0 9px 0 5px; }
.on span, .doc-tabs span { border-bottom: 2px solid #1a4688; line-height: 13px; }

.editor { flex: 1; min-width: 0; display: flex; flex-direction: column; }
.doc-tabs { flex: none; height: 31px; display: flex; align-items: center; gap: 10px; padding-left: 14px; border-bottom: 1px solid #ddd; }
.doc-tabs a { display: flex; align-items: center; gap: 4px; height: 24px; width: 92px; padding-left: 5px; border-radius: 3px; }
.stage { flex: 1; min-height: 0; display: flex; background: #f5f5f5; }
.view { flex: 1; overflow: hidden; padding: 13px 75px 0 14px; }
.vscroll { width: 11px; background: #fafafa; display: flex; flex-direction: column; align-items: center; padding: 8px 0 6px; gap: 5px; }
.vscroll .up, .vscroll .down { border: 4px solid transparent; border-bottom: 5px solid #888; border-top: 0; }
.vscroll .down { border-top: 5px solid #888; border-bottom: 0; margin-top: auto; }
.vscroll .thumb { width: 7px; height: 372px; border-radius: 4px; background: #8b8b8b; }

.dash {
  display: grid; grid-template-columns: 207fr 172fr 436fr 225fr; grid-template-rows: 49px 242px 270px; gap: 4px; padding: 12px 12px 12px 11px; color: #fff;
  background: repeating-linear-gradient(90deg, transparent 0 9px, #252b36 9px 10px, transparent 10px 35px), repeating-linear-gradient(transparent 0 19px, #20252e 19px 20px, transparent 20px 35px), #17181c;
  border-left: 1px solid #999;
}
.card { background: #1e2125; border: 1px solid #909090; min-width: 0; overflow: hidden; }
.dash h1 { grid-column: 1 / -1; font-size: 31px; line-height: 47px; text-align: center; }
.dash h2 { font-size: 16px; line-height: 25px; text-align: center; white-space: nowrap; }
.dash p { text-align: center; }
.c-rev, .c-rev .rev { display: flex; flex-direction: column; }
.c-rev .rev { height: 155px; flex: none; }
.rev p { flex: 1; display: flex; align-items: center; justify-content: center; gap: 20px; font-size: 36px; }
.rev p svg { margin-top: -8px; }
.years { flex: 1; display: grid; grid-template-columns: 1fr 1fr; border-top: 1px solid #909090; }
.years > div + div { border-left: 1px solid #909090; }
.years p { line-height: 60px; }
.n16 { font-size: 16px; } .n19 { font-size: 19px; } .n28 { font-size: 28px; line-height: 98px; } .n43 { font-size: 43px; line-height: 97px; }
.kpis { display: grid; grid-template-rows: 119px 119px; gap: 4px; min-width: 0; }
.c-table { padding: 0 4px; }
table { width: 100%; height: 198px; margin-top: 4px; table-layout: fixed; border-collapse: collapse; font-size: 12px; }
.k1 { width: 31%; } .k2 { width: 31%; }
th { background: #00cdb3; font-weight: normal; border-left: 1px solid #17181c; padding: 0; height: 25px; }
th:first-child, td:first-child { border-left: 0; }
td { padding: 0 4px; text-align: right; border-left: 1px solid #1a1c1f; }
td:first-child { text-align: left; }
tbody tr:nth-child(even) { background: #18191c; }
.fill { width: 100%; height: auto; }
.pie-t { font-size: 10px; fill: #3f4650; text-anchor: middle; }
.c-map { grid-column: 1 / 3; }
.map-t, .map-r { font-weight: bold; font-size: 14px; fill: #fff; text-anchor: middle; }
.map-r { fill: #ff4038; }
.right-col { grid-column: 3 / 5; display: grid; grid-template-rows: 190px 1fr; gap: 4px; min-width: 0; }
.ax { font-size: 10px; fill: #fff; } .bold { font-weight: bold; }
.end { text-anchor: end; } .mid { text-anchor: middle; }

.status { flex: none; height: 30px; display: flex; align-items: center; background: #1a4688; color: #fff; border-top: 1px solid #2f5a98; }
.check { gap: 9px; padding: 0 8px 0 7px; height: 20px; border-right: 1px solid #7d98bf; }
.doc { padding: 0 12px 0 11px; height: 20px; line-height: 20px; border-right: 1px solid #b5c4da; }
.zoom { margin-left: auto; display: flex; gap: 17px; padding: 0 11px; height: 20px; border: solid #7d98bf; border-width: 0 1px; align-items: center; }
.slider { display: flex; align-items: center; gap: 16px; padding: 0 10px 0 14px; }
.slider span { margin-left: 4px; }
.slider input { appearance: none; width: 88px; height: 14px; margin: 0; background: linear-gradient(#8fa6c8, #8fa6c8) center / 100% 2px no-repeat; }
.slider input::-webkit-slider-thumb { appearance: none; width: 5px; height: 14px; background: #fff; }
.check, .doc { font-weight: bold; font-size: 10px; }

.note { position: absolute; left: -4px; top: -8px; width: 430px; height: 460px; pointer-events: none; }
.note text { font: 12px "Noto Sans", sans-serif; fill: #ff0033; }

.behind { flex: none; height: 79px; padding: 2px 0 0 8px; display: grid; grid-template-columns: 533fr 931fr 52fr; gap: 5px; background: linear-gradient(90deg, #050505 8px, #17181c 8px); }
.behind::after { content: ""; background: #fff; margin-left: -4px; }
.pane { background: #1e2125; }
.bx { font-weight: bold; font-size: 9px; fill: #f0f0f0; }
.pane svg { width: 100%; height: auto; }
```
